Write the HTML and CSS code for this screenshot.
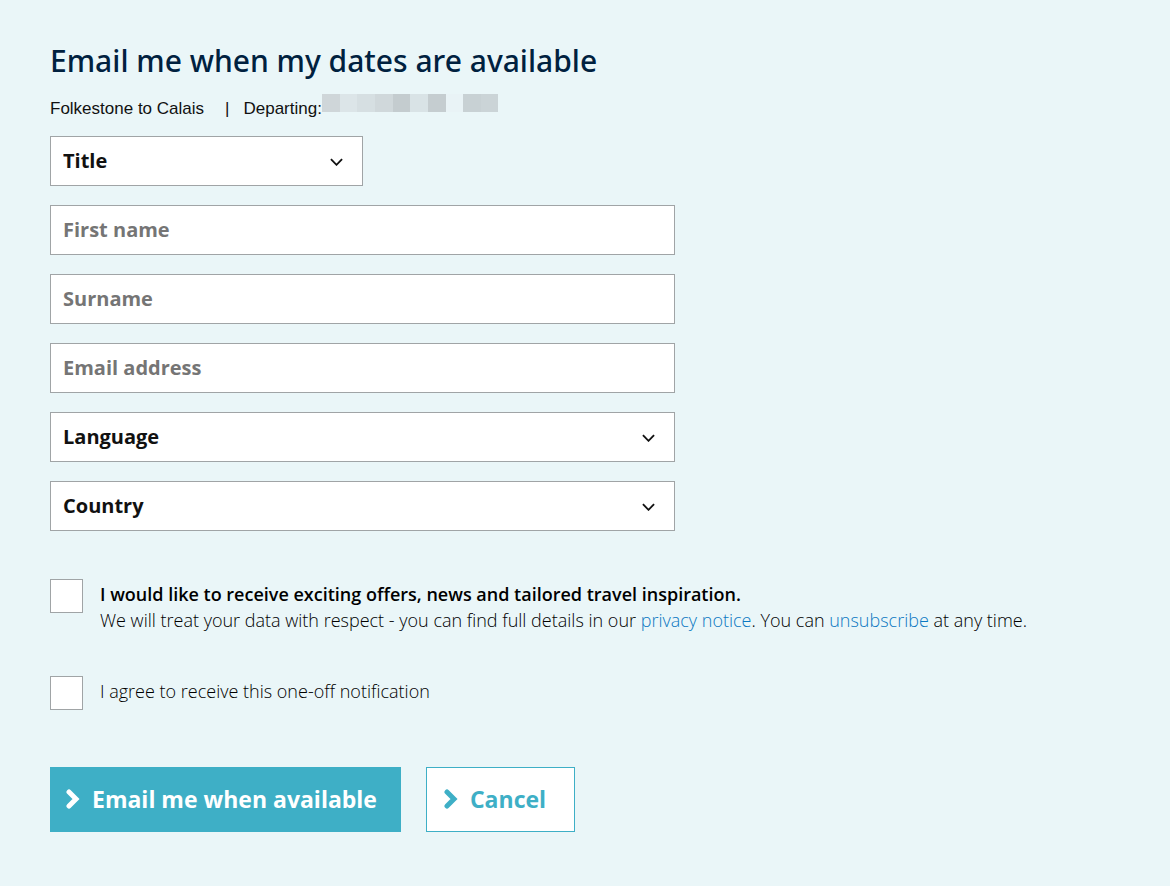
FILE: index.html
```html
<!DOCTYPE html>
<html lang="en">
<head>
<meta charset="utf-8">
<title>Email me when my dates are available</title>
<link rel="stylesheet" href="styles.css">
</head>
<body>
<main class="page">
  <h1 class="heading">Email me when my dates are available</h1>
  <p class="trip">
    <span>Folkestone to Calais</span>
    <span class="divider">|</span>
    <span>Departing:</span>
    <svg class="redacted" width="176" height="18" viewBox="0 0 176 18" aria-hidden="true" shape-rendering="crispEdges">
      <path fill="#cfd6d9" d="M0 0h18v18H0z"/><path fill="#dce5e8" d="M18 0h17v18H18z"/><path fill="#d6dfe2" d="M35 0h18v18H35z"/><path fill="#d0d8db" d="M53 0h18v18H53z"/><path fill="#c4cccf" d="M71 0h17v18H71z"/><path fill="#d9e3e6" d="M88 0h18v18H88z"/><path fill="#c5cdd0" d="M106 0h18v18H106z"/><path fill="#e9f3f6" d="M124 0h17v18H124z"/><path fill="#c8d1d4" d="M141 0h18v18H141z"/><path fill="#cbd4d7" d="M159 0h17v18H159z"/>
    </svg>
  </p>
  <form class="form">
    <div class="fields">
      <div class="select short">
        <select class="control" aria-label="Title"><option>Title</option></select>
        <svg class="chevron" viewBox="0 0 14 8" aria-hidden="true"><path d="M1 1l6 6 6-6"/></svg>
      </div>
      <input class="control" type="text" placeholder="First name" aria-label="First name">
      <input class="control" type="text" placeholder="Surname" aria-label="Surname">
      <input class="control" type="email" placeholder="Email address" aria-label="Email address">
      <div class="select">
        <select class="control" aria-label="Language"><option>Language</option></select>
        <svg class="chevron" viewBox="0 0 14 8" aria-hidden="true"><path d="M1 1l6 6 6-6"/></svg>
      </div>
      <div class="select">
        <select class="control" aria-label="Country"><option>Country</option></select>
        <svg class="chevron" viewBox="0 0 14 8" aria-hidden="true"><path d="M1 1l6 6 6-6"/></svg>
      </div>
    </div>
    <div class="consents">
      <div class="consent">
        <input class="tick" type="checkbox" id="offers">
        <div class="consent-text">
          <label class="offer" for="offers">I would like to receive exciting offers, news and tailored travel inspiration.</label>
          <p class="note">We will treat your data with respect - you can find full details in our <a href="#">privacy notice</a>. You can <a href="#">unsubscribe</a> at any time.</p>
        </div>
      </div>
      <div class="consent">
        <input class="tick" type="checkbox" id="agree">
        <label class="consent-text" for="agree">I agree to receive this one-off notification</label>
      </div>
    </div>
    <div class="actions">
      <button class="button primary" type="submit"><svg class="arrow" viewBox="0 0 14 20" aria-hidden="true"><path d="M3 3l7 7-7 7"/></svg>Email me when available</button>
      <button class="button secondary" type="button"><svg class="arrow" viewBox="0 0 14 20" aria-hidden="true"><path d="M3 3l7 7-7 7"/></svg>Cancel</button>
    </div>
  </form>
</main>
</body>
</html>
```
FILE: styles.css
```css
* { box-sizing: border-box; }
body {
  margin: 0;
  background: #eaf6f8;
  color: #111;
  font-family: "Open Sans", "Noto Sans", sans-serif;
}
.page { padding: 40px 50px; }
.heading {
  margin: 0;
  color: #00213f;
  font-family: "Noto Sans", "Open Sans", sans-serif;
  font-size: 30px;
  font-weight: 500;
  line-height: 42px;
}
.trip {
  display: flex;
  align-items: center;
  height: 54px;
  margin: 0;
  font: 17px/54px "Liberation Sans", Arial, sans-serif;
}
.divider { padding: 0 14px 0 21px; }
.redacted { margin-bottom: 12px; }
.fields {
  display: grid;
  gap: 19px;
  max-width: 625px;
}
.select { position: relative; }
.short { width: 50%; }
.control {
  appearance: none;
  display: block;
  width: 100%;
  height: 50px;
  margin: 0;
  padding: 0 12px 2px;
  border: 1px solid #a0a4a6;
  border-radius: 0;
  background: #fff;
  color: #111;
  font: 700 20px "Open Sans", "Noto Sans", sans-serif;
}
.control::placeholder { color: #757575; opacity: 1; }
.chevron {
  position: absolute;
  top: 22px;
  right: 20px;
  width: 13px;
  height: 8px;
  fill: none;
  stroke: #111;
  stroke-width: 2;
  pointer-events: none;
}
.consents {
  display: grid;
  gap: 43px;
  padding: 48px 0 57px;
}
.consent {
  display: flex;
  align-items: flex-start;
  gap: 17px;
}
.tick {
  appearance: none;
  flex: none;
  width: 33px;
  height: 34px;
  margin: 0;
  border: 1px solid #a0a4a6;
  background: #fff;
}
.consent-text {
  padding-top: 2px;
  color: #000;
  font-size: 18px;
  font-weight: 300;
  line-height: 26px;
}
.offer { font-weight: 600; }
.note { margin: 0; }
.note a { color: #0a78c2; text-decoration: none; }
.actions { display: flex; flex-wrap: wrap; gap: 25px; }
.button {
  display: flex;
  align-items: center;
  gap: 12px;
  height: 65px;
  border: 1px solid #3eafc6;
  font: 700 23px "Open Sans", "Noto Sans", sans-serif;
}
.primary { padding: 0 23px 2px 15px; background: #3eafc6; color: #fff; }
.secondary { padding: 0 28px 2px 17px; background: #fff; color: #3eafc6; }
.arrow {
  width: 14px;
  height: 20px;
  fill: none;
  stroke: currentColor;
  stroke-width: 5;
  stroke-linecap: round;
}
```
